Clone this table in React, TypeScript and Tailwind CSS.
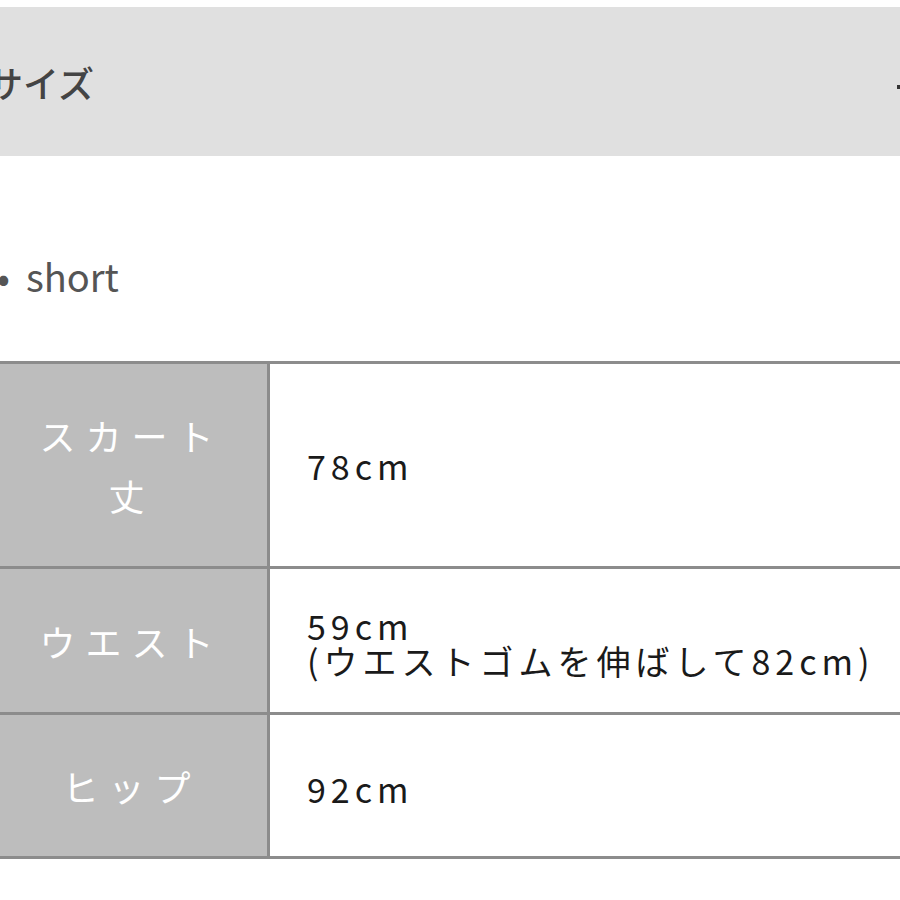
import React from "react";

const font = { fontFamily: '"Noto Sans CJK JP", "Noto Sans", sans-serif' };

export default function App() {
  return (
    <div className="w-[900px] h-[900px] overflow-hidden bg-white relative" style={font}>
      <div className="mt-[7px] h-[149px] bg-[#e0e0e0] flex items-center relative">
        <span className="ml-[-13px] text-[36px] leading-none text-[#444] font-medium">サイズ</span>
        <span className="absolute right-0 top-[78px] w-[3px] h-[4px] bg-[#333]"></span>
      </div>
      <div className="h-[205px] flex items-center pt-[34px]">
        <span className="ml-[-3px] text-[38px] leading-none text-[#555] flex items-center">
          <span>•</span>
          <span className="ml-[16px]">short</span>
        </span>
      </div>
      <div className="border-t-[3px] border-b-[3px] border-[#8c8c8c]">
        <div className="flex h-[202px]">
          <div className="w-[270px] shrink-0 bg-[#bdbdbd] border-r-[3px] border-[#8c8c8c] flex flex-col items-center justify-center text-white text-[36px] leading-[60px] tracking-[10px] pr-[4px]">
            <span>スカート</span>
            <span>丈</span>
          </div>
          <div className="flex-1 flex items-center pl-[37px] text-[34px] text-[#1a1a1a] tracking-[5px]">78cm</div>
        </div>
        <div className="flex h-[146px] border-t-[3px] border-[#8c8c8c]">
          <div className="w-[270px] shrink-0 bg-[#bdbdbd] border-r-[3px] border-[#8c8c8c] flex items-center justify-center text-white text-[36px] tracking-[10px] pr-[4px]">
            ウエスト
          </div>
          <div className="flex-1 flex flex-col justify-center pl-[37px] text-[34px] leading-[35px] text-[#1a1a1a] tracking-[5px] pt-[4px]">
            <span>59cm</span>
            <span className="whitespace-nowrap">(ウエストゴムを伸ばして82cm)</span>
          </div>
        </div>
        <div className="flex h-[144px] border-t-[3px] border-[#8c8c8c]">
          <div className="w-[270px] shrink-0 bg-[#bdbdbd] border-r-[3px] border-[#8c8c8c] flex items-center justify-center text-white text-[36px] tracking-[10px] pr-[4px]">
            ヒップ
          </div>
          <div className="flex-1 flex items-center pl-[37px] pt-[6px] text-[34px] text-[#1a1a1a] tracking-[5px]">92cm</div>
        </div>
      </div>
    </div>
  );
}
